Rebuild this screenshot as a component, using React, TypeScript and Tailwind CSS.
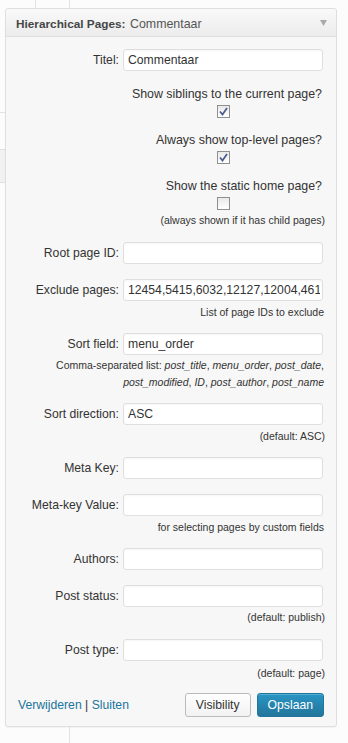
import React from "react";

const LINK = "#21759b";

function Field({ label, value = "" }: { label: string; value?: string }) {
  return (
    <div className="flex items-center justify-end">
      <label className="mr-[4px] text-[12.2px] leading-[16px]">{label}</label>
      <input
        type="text"
        defaultValue={value}
        className="w-[200px] h-[22px] rounded-[3px] border border-[#dfdfdf] bg-white pl-[4px] pr-[2px] text-[12.2px] text-[#333] outline-none shadow-[inset_0_1px_2px_rgba(0,0,0,0.04)]"
      />
    </div>
  );
}

function Help({ children, className = "" }: { children: React.ReactNode; className?: string }) {
  return <div className={`text-right text-[10.5px] leading-[14px] ${className}`}>{children}</div>;
}

function Check({ checked }: { checked?: boolean }) {
  return (
    <div className="w-[13px] h-[13px] border border-[#8f8f8f] bg-gradient-to-b from-[#e9e9e9] to-[#ffffff] flex items-center justify-center">
      {checked && (
        <svg width="9" height="9" viewBox="0 0 9 9">
          <path d="M1 4.5 L3.5 7.5 L8 1" fill="none" stroke="#4a5a8c" strokeWidth="1.7" />
        </svg>
      )}
    </div>
  );
}

function CheckRow({ label, checked, className = "" }: { label: string; checked?: boolean; className?: string }) {
  return (
    <div className={className}>
      <div className="text-right text-[12.4px] leading-[16px] pr-[1px]">{label}</div>
      <div className="flex justify-end mt-[3px] mr-[93px]">
        <Check checked={checked} />
      </div>
    </div>
  );
}

export default function App() {
  return (
    <div className="w-[348px] h-[743px] overflow-hidden bg-[#fcfcfc] text-[#333] font-['Liberation_Sans',Arial,sans-serif]">
      {/* admin background lines above the widget */}
      <div className="h-[8px]">
        <div className="ml-[35px] w-[35px] h-full border-x border-[#e3e3e3]" />
      </div>

      <div className="flex">
        {/* left edge of the admin page behind */}
        <div className="w-[5px] shrink-0">
          <div className="h-[104px]" />
          <div className="h-[37px] border-t border-[#e3e3e3]" />
          <div className="h-[34px] border-y border-[#e0e0e0] bg-[#f1f1f1]" />
        </div>

        {/* widget */}
        <div className="w-[332px] shrink-0 rounded-[3px] border border-[#dfdfdf] bg-[#f7f7f7] shadow-[0_1px_1px_rgba(0,0,0,0.04)]">
          <div className="h-[28px] flex items-center justify-between pl-[10px] pr-[9px] border-b border-[#dfdfdf] rounded-t-[3px] bg-gradient-to-b from-[#f9f9f9] to-[#ececec]">
            <div className="text-[#464646]">
              <span className="font-bold text-[11.8px]">Hierarchical Pages:</span>{" "}
              <span className="text-[12.4px] text-[#555]">Commentaar</span>
            </div>
            <svg width="7" height="6" viewBox="0 0 7 6">
              <path d="M0 0 H7 L3.5 6 Z" fill="#aaaaaa" />
            </svg>
          </div>

          <div className="pl-[12px] pr-[13px] pb-[9px]">
            <div className="mt-[12px]">
              <Field label="Titel:" value="Commentaar" />
            </div>
            <CheckRow className="mt-[15px]" label="Show siblings to the current page?" checked />
            <CheckRow className="mt-[14px]" label="Always show top-level pages?" checked />
            <CheckRow className="mt-[14px]" label="Show the static home page?" />
            <Help className="mt-[3px] -mr-[2px]">(always shown if it has child pages)</Help>

            <div className="mt-[15px]">
              <Field label="Root page ID:" />
            </div>
            <div className="mt-[15px]">
              <Field label="Exclude pages:" value="12454,5415,6032,12127,12004,4617" />
            </div>
            <Help className="mt-[4px] -mr-[1px]">List of page IDs to exclude</Help>

            <div className="mt-[14px]">
              <Field label="Sort field:" value="menu_order" />
            </div>
            <Help className="mt-[2px] leading-[17px] -mr-[1px]">
              Comma-separated list: <i>post_title</i>, <i>menu_order</i>, <i>post_date</i>,
              <br />
              <i>post_modified</i>, <i>ID</i>, <i>post_author</i>, <i>post_name</i>
            </Help>

            <div className="mt-[12px]">
              <Field label="Sort direction:" value="ASC" />
            </div>
            <Help className="mt-[4px] -mr-[2px]">(default: ASC)</Help>

            <div className="mt-[14px]">
              <Field label="Meta Key:" />
            </div>
            <div className="mt-[15px]">
              <Field label="Meta-key Value:" />
            </div>
            <Help className="mt-[4px] -mr-[1px]">for selecting pages by custom fields</Help>

            <div className="mt-[14px]">
              <Field label="Authors:" />
            </div>
            <div className="mt-[15px]">
              <Field label="Post status:" />
            </div>
            <Help className="mt-[3px] -mr-[2px]">(default: publish)</Help>

            <div className="mt-[15px]">
              <Field label="Post type:" />
            </div>
            <Help className="mt-[5px] -mr-[2px]">(default: page)</Help>

            <div className="mt-[13px] flex items-center justify-between">
              <div className="text-[12.2px]">
                <a href="#" style={{ color: LINK }}>Verwijderen</a> | <a href="#" style={{ color: LINK }}>Sluiten</a>
              </div>
              <div className="flex gap-[6px] -mr-[1px]">
                <button className="h-[24px] px-[10px] rounded-[3px] border border-[#bbbbbb] bg-gradient-to-b from-[#fefefe] to-[#f2f2f2] text-[12.2px] text-[#333]">
                  Visibility
                </button>
                <button className="h-[24px] px-[10px] rounded-[3px] border border-[#21759b] bg-gradient-to-b from-[#2a95c5] to-[#21759b] text-[12.2px] text-white shadow-[inset_0_1px_0_rgba(120,200,230,0.5)]">
                  Opslaan
                </button>
              </div>
            </div>
          </div>
        </div>

        <div className="w-[11px] shrink-0" />
      </div>

      {/* admin background line below the widget */}
      <div className="h-[20px]">
        <div className="ml-[69px] h-full border-l border-[#e3e3e3]" />
      </div>
    </div>
  );
}
